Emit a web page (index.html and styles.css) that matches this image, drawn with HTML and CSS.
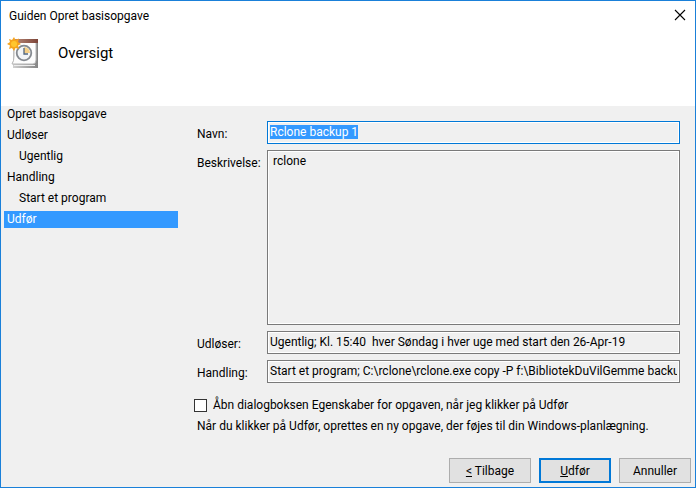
FILE: index.html
```html
<!DOCTYPE html>
<html lang="da">
<head>
    <meta charset="UTF-8">
    <meta name="viewport" content="width=device-width, initial-scale=1.0">
    <title>Guiden Opret basisopgave</title>
    <link rel="stylesheet" href="styles.css">
</head>
<body>

    <!-- Title bar -->
    <header class="header">
        <div class="title-bar">
            <span>Guiden Opret basisopgave</span>
            <button class="close-btn" type="button" aria-label="Luk">
                <svg width="12" height="12" viewBox="0 0 12 12">
                    <path d="M1 1 L11 11 M11 1 L1 11" stroke="#000" stroke-width="1.1" fill="none"/>
                </svg>
            </button>
        </div>
        <div class="heading">
            <svg class="task-icon" width="32" height="34" viewBox="0 0 32 34">
                <defs>
                    <linearGradient id="bar" x1="0" x2="1">
                        <stop offset="0" stop-color="#b98a78"/>
                        <stop offset="1" stop-color="#7c4438"/>
                    </linearGradient>
                    <linearGradient id="back" x1="0" x2="1">
                        <stop offset="0" stop-color="#d0d0d0"/>
                        <stop offset="1" stop-color="#858585"/>
                    </linearGradient>
                </defs>
                <path d="M6 5 H31 V32 H6 Z" fill="url(#back)"/>
                <path d="M7 29 H28 V30 H7 Z" fill="#eee"/>
                <path d="M7 5 H29 V24 Q29 28 26 28 H5 Q7 25 7 20 Z" fill="#fdfdfd" stroke="#b5b5b5" stroke-width="1"/>
                <path d="M7 3 H31 V7 H7 Z" fill="url(#bar)"/>
                <circle cx="17" cy="17" r="7.300" fill="#f2f5f8" stroke="#858a90" stroke-width="1.800"/>
                <path d="M17 17 V11 A6 6 0 0 1 23 17 Z" fill="#f5cf86"/>
                <path d="M17 12 V18 H21" stroke="#50657c" stroke-width="1.3" fill="none"/>
                <path d="M7 1 L8.5 4 L12 2.5 L11 6 L14 8 L11 9.500 L12 13 L8.500 12 L7 15 L5 12 L2 13 L3 9.500 L0 8 L3 6 L2 3 L5 4 Z" fill="#f7a41c"/>
                <circle cx="7" cy="8" r="3" fill="#ffc62e"/>
            </svg>
            <h1>Oversigt</h1>
        </div>
    </header>

    <div class="wizard">
        <!-- Steps -->
        <ul class="steps">
            <li>Opret basisopgave</li>
            <li>Udløser</li>
            <li class="sub">Ugentlig</li>
            <li>Handling</li>
            <li class="sub">Start et program</li>
            <li class="active">Udfør</li>
        </ul>

        <!-- Summary -->
        <main class="summary">
            <div class="fields">
                <label for="name">Navn:</label>
                <input type="text" id="name" value="Rclone backup 1" readonly>

                <label for="description">Beskrivelse:</label>
                <textarea id="description" readonly>rclone</textarea>

                <label for="trigger">Udløser:</label>
                <input type="text" id="trigger" value="Ugentlig; Kl. 15:40  hver Søndag i hver uge med start den 26-Apr-19" readonly>

                <label for="action">Handling:</label>
                <input type="text" id="action" value="Start et program; C:\rclone\rclone.exe copy -P f:\BibliotekDuVilGemme backup:" readonly>
            </div>
            <div class="check-row">
                <input type="checkbox" id="open-properties">
                <label for="open-properties">Åbn dialogboksen Egenskaber for opgaven, når jeg klikker på Udfør</label>
            </div>
            <p class="note">Når du klikker på Udfør, oprettes en ny opgave, der føjes til din Windows-planlægning.</p>
        </main>
    </div>

    <!-- Buttons -->
    <footer class="buttons">
        <button class="btn btn-back" type="button"><u>&lt;</u> Tilbage</button>
        <button class="btn btn-default" type="button"><u>U</u>dfør</button>
        <button class="btn" type="button">Annuller</button>
    </footer>

    <script>
        const nameInput = document.getElementById('name');
        nameInput.focus();
        nameInput.select();
    </script>

</body>
</html>
```
FILE: styles.css
```css
* {
    box-sizing: border-box;
}

body {
    margin: 0;
    min-height: 100vh;
    display: flex;
    flex-direction: column;
    border: 1px solid #1a80d9;
    background-color: #f0f0f0;
    color: #000;
    font-family: "Segoe UI", Roboto, sans-serif;
    font-size: 12px;
    line-height: 16px;
}

/* Header */
.header {
    background-color: #fff;
    padding-bottom: 35px;
}

.title-bar {
    display: flex;
    justify-content: space-between;
    align-items: center;
    height: 29px;
    padding: 0 8px;
}

.close-btn {
    display: flex;
    padding: 0 1px 2px;
    border: none;
    background: none;
}

.heading {
    display: flex;
    align-items: center;
    gap: 19px;
    height: 41px;
    padding: 5px 6px 0;
}

.heading h1 {
    margin: 0;
    font-size: 15px;
    font-weight: normal;
    line-height: 20px;
}

/* Steps */
.wizard {
    flex: 1;
    display: flex;
    gap: 16px;
}

.steps {
    display: flex;
    flex-direction: column;
    flex-shrink: 0;
    gap: 4px;
    width: 177px;
    margin: 0;
    padding: 0 0 0 3px;
    list-style: none;
}

.steps li {
    height: 17px;
    padding-left: 3px;
}

.steps .sub {
    padding-left: 15px;
}

.steps .active {
    background-color: #3399ff;
    color: #fff;
}

/* Summary */
.summary {
    flex: 1;
    min-width: 0;
    display: flex;
    flex-direction: column;
    padding: 15px 15px 24px 0;
}

.fields {
    flex: 1;
    display: grid;
    grid-template-columns: 70px 1fr;
    grid-template-rows: auto 1fr auto auto;
    gap: 6px 0;
    padding-left: 3px;
}

.fields label {
    padding-top: 5px;
}

.fields input,
.fields textarea {
    width: 100%;
    min-width: 0;
    margin: 0;
    border: 1px solid #7a7a7a;
    border-radius: 0;
    outline: none;
    background-color: #f0f0f0;
    box-shadow: inset 0 0 0 1px #fff;
    color: #000;
    font: inherit;
    resize: none;
}

.fields input {
    height: 23px;
    padding: 0 2px 2px;
}

.fields textarea {
    padding: 2px 5px;
}

.fields input:focus {
    border-color: #0078d7;
}

.fields input::selection {
    background-color: #3399ff;
    color: #fff;
}

.check-row {
    display: flex;
    align-items: center;
    gap: 6px;
    margin-top: 14px;
}

.check-row input {
    appearance: none;
    width: 13px;
    height: 13px;
    margin: 0;
    border: 1px solid #333;
    background-color: #fff;
}

.note {
    margin: 5px 0 0;
    padding-left: 3px;
}

/* Buttons */
.buttons {
    display: flex;
    justify-content: flex-end;
    gap: 8px;
    padding: 0 4px 4px;
}

.btn {
    width: 72px;
    height: 25px;
    padding: 0;
    border: 1px solid #adadad;
    background-color: #e1e1e1;
    color: #000;
    font: inherit;
}

.btn-back {
    width: 82px;
}

.btn-default {
    border: 2px solid #0078d7;
}
```
